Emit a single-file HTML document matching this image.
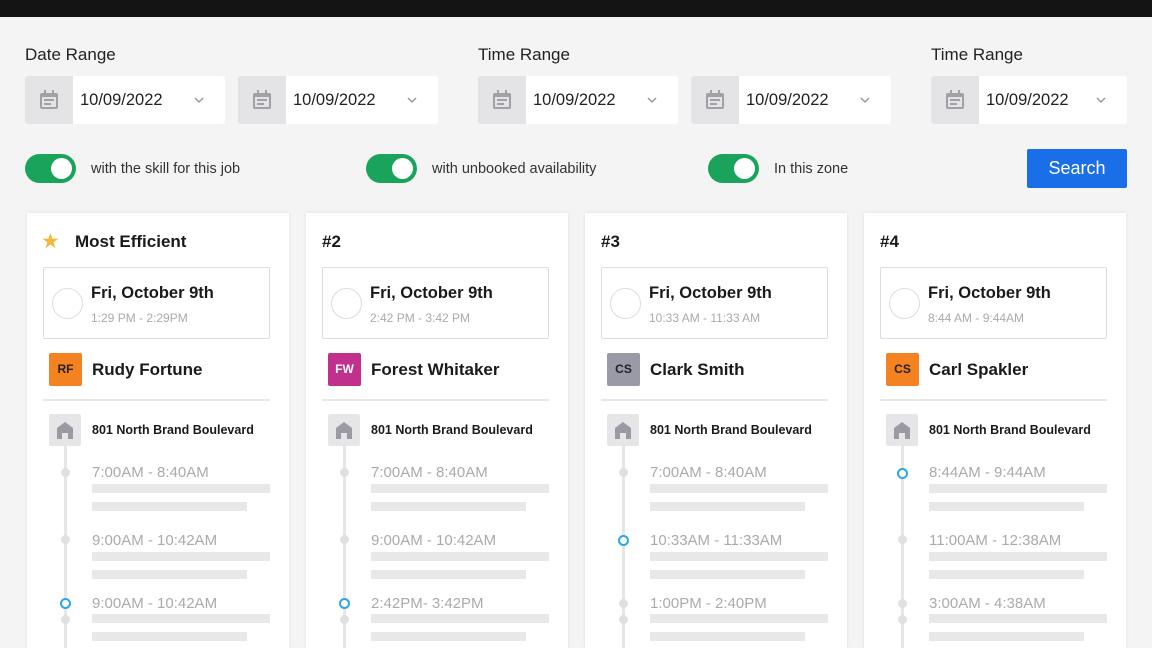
<!DOCTYPE html>
<html><head><meta charset="utf-8"><style>
*{margin:0;padding:0;box-sizing:border-box}
html{width:1152px;height:648px;overflow:hidden}
body{width:1152px;height:648px;overflow:hidden;background:#f4f4f4;font-family:"Liberation Sans",sans-serif;color:#1a1a1a;position:relative}
.a{position:absolute}
.top{left:0;top:0;width:1152px;height:17px;background:#141414}
.lbl{font-size:17px;color:#222;top:45px}
.inp{top:76px;height:48px;background:#fff;border-radius:3px;overflow:hidden}
.inp .ic{position:absolute;left:0;top:0;width:48px;height:48px;background:#e4e4e6}
.inp .ic svg{position:absolute;left:13px;top:13px}
.inp .t{position:absolute;left:55px;top:15px;font-size:16.5px;color:#222}
.inp .ch{position:absolute;right:20px;top:19px}
.tog{top:154px;width:51px;height:29px;border-radius:15px;background:#1aa35a}
.tog::after{content:"";position:absolute;right:4px;top:4px;width:21px;height:21px;border-radius:50%;background:#fff}
.tl{top:161px;font-size:14.5px;color:#333}
.btn{left:1027px;top:149px;width:100px;height:39px;background:#1a6fe8;color:#fff;font-size:18px;text-align:center;line-height:39px;border-radius:2px}
.card{top:213px;width:262px;height:435px;background:#fff;box-shadow:0 0 4px rgba(0,0,0,.08)}
.card .h{position:absolute;left:48px;top:19px;font-size:17px;font-weight:bold}
.card .num{left:16px}
.db{position:absolute;left:16px;top:54px;width:227px;height:72px;border:1px solid #ddd;border-radius:2px}
.db .c{position:absolute;left:8px;top:20px;width:31px;height:31px;border:1px solid #ddd;border-radius:50%}
.db .d{position:absolute;left:47px;top:16px;font-size:16.5px;font-weight:bold}
.db .tm{position:absolute;left:47px;top:43px;font-size:12px;color:#aaa}
.av{position:absolute;left:22px;top:140px;width:33px;height:33px;border-radius:2px;color:#222;font-size:12px;font-weight:bold;text-align:center;line-height:33px}
.nm{position:absolute;left:65px;top:147px;font-size:17px;font-weight:bold}
.dv{position:absolute;left:16px;top:186px;width:227px;height:2px;background:#e8e8e8}
.hm{position:absolute;left:22px;top:201px;width:32px;height:32px;background:#e6e6e8;border-radius:2px}
.hm svg{position:absolute;left:7px;top:7px}
.ad{position:absolute;left:65px;top:210px;font-size:12.5px;font-weight:bold}
.ln{position:absolute;left:37px;top:233px;width:3px;height:230px;background:#e6e6e6}
.dt{position:absolute;left:34px;width:9px;height:9px;border-radius:50%;background:#e0e0e0}
.dt.b{background:#fff;border:2px solid #2aa5f0;left:33px;width:11px;height:11px}
.tx{position:absolute;left:65px;font-size:15px;color:#aaa}
.br{position:absolute;left:65px;height:9px;background:#e8e8e8}
</style></head><body>
<div class="a top"></div>
<div class="a lbl" style="left:25px">Date Range</div>
<div class="a lbl" style="left:478px">Time Range</div>
<div class="a lbl" style="left:931px">Time Range</div>

<div class="a inp" style="left:25px;width:200px"><div class="ic"><svg width="22" height="22" viewBox="0 0 22 22"><rect x="2" y="4" width="18" height="16" rx="2" fill="#a0a0a6"/><rect x="4" y="8" width="14" height="10" fill="#e4e4e6"/><rect x="6" y="1" width="2" height="5" fill="#a0a0a6"/><rect x="14" y="1" width="2" height="5" fill="#a0a0a6"/><rect x="6" y="10" width="10" height="2" fill="#a0a0a6"/><rect x="6" y="14" width="7" height="2" fill="#a0a0a6"/></svg></div><div class="t">10/09/2022</div><svg class="ch" width="12" height="10" viewBox="0 0 12 10"><path d="M2 3l4 4 4-4" fill="none" stroke="#999" stroke-width="1.5"/></svg></div>
<div class="a inp" style="left:238px;width:200px"><div class="ic"><svg width="22" height="22" viewBox="0 0 22 22"><rect x="2" y="4" width="18" height="16" rx="2" fill="#a0a0a6"/><rect x="4" y="8" width="14" height="10" fill="#e4e4e6"/><rect x="6" y="1" width="2" height="5" fill="#a0a0a6"/><rect x="14" y="1" width="2" height="5" fill="#a0a0a6"/><rect x="6" y="10" width="10" height="2" fill="#a0a0a6"/><rect x="6" y="14" width="7" height="2" fill="#a0a0a6"/></svg></div><div class="t">10/09/2022</div><svg class="ch" width="12" height="10" viewBox="0 0 12 10"><path d="M2 3l4 4 4-4" fill="none" stroke="#999" stroke-width="1.5"/></svg></div>
<div class="a inp" style="left:478px;width:200px"><div class="ic"><svg width="22" height="22" viewBox="0 0 22 22"><rect x="2" y="4" width="18" height="16" rx="2" fill="#a0a0a6"/><rect x="4" y="8" width="14" height="10" fill="#e4e4e6"/><rect x="6" y="1" width="2" height="5" fill="#a0a0a6"/><rect x="14" y="1" width="2" height="5" fill="#a0a0a6"/><rect x="6" y="10" width="10" height="2" fill="#a0a0a6"/><rect x="6" y="14" width="7" height="2" fill="#a0a0a6"/></svg></div><div class="t">10/09/2022</div><svg class="ch" width="12" height="10" viewBox="0 0 12 10"><path d="M2 3l4 4 4-4" fill="none" stroke="#999" stroke-width="1.5"/></svg></div>
<div class="a inp" style="left:691px;width:200px"><div class="ic"><svg width="22" height="22" viewBox="0 0 22 22"><rect x="2" y="4" width="18" height="16" rx="2" fill="#a0a0a6"/><rect x="4" y="8" width="14" height="10" fill="#e4e4e6"/><rect x="6" y="1" width="2" height="5" fill="#a0a0a6"/><rect x="14" y="1" width="2" height="5" fill="#a0a0a6"/><rect x="6" y="10" width="10" height="2" fill="#a0a0a6"/><rect x="6" y="14" width="7" height="2" fill="#a0a0a6"/></svg></div><div class="t">10/09/2022</div><svg class="ch" width="12" height="10" viewBox="0 0 12 10"><path d="M2 3l4 4 4-4" fill="none" stroke="#999" stroke-width="1.5"/></svg></div>
<div class="a inp" style="left:931px;width:196px"><div class="ic"><svg width="22" height="22" viewBox="0 0 22 22"><rect x="2" y="4" width="18" height="16" rx="2" fill="#a0a0a6"/><rect x="4" y="8" width="14" height="10" fill="#e4e4e6"/><rect x="6" y="1" width="2" height="5" fill="#a0a0a6"/><rect x="14" y="1" width="2" height="5" fill="#a0a0a6"/><rect x="6" y="10" width="10" height="2" fill="#a0a0a6"/><rect x="6" y="14" width="7" height="2" fill="#a0a0a6"/></svg></div><div class="t">10/09/2022</div><svg class="ch" width="12" height="10" viewBox="0 0 12 10"><path d="M2 3l4 4 4-4" fill="none" stroke="#999" stroke-width="1.5"/></svg></div>

<div class="a tog" style="left:25px"></div><div class="a tl" style="left:91px">with the skill for this job</div>
<div class="a tog" style="left:366px"></div><div class="a tl" style="left:432px">with unbooked availability</div>
<div class="a tog" style="left:708px"></div><div class="a tl" style="left:774px">In this zone</div>
<div class="a btn">Search</div>

<div class="a card" style="left:27px">
<div class="a" style="left:14px;top:16px;color:#f6b83c;font-size:21px">★</div>
<div class="h">Most Efficient</div>
<div class="db"><div class="c"></div><div class="d">Fri, October 9th</div><div class="tm">1:29 PM - 2:29PM</div></div>
<div class="av" style="background:#f58220">RF</div><div class="nm">Rudy Fortune</div>
<div class="dv"></div>
<div class="hm"><svg width="18" height="18" viewBox="0 0 18 18"><path d="M1 7L9 1l8 6v11h-5v-6H6v6H1z" fill="#9a9aa2"/></svg></div><div class="ad">801 North Brand Boulevard</div>
<div class="ln"></div>
<div class="dt" style="top:255px"></div><div class="dt" style="top:322px"></div><div class="dt b" style="top:385px"></div><div class="dt" style="top:402px"></div>
<div class="tx" style="top:251px">7:00AM - 8:40AM</div><div class="br" style="top:271px;width:178px"></div><div class="br" style="top:289px;width:155px"></div>
<div class="tx" style="top:319px">9:00AM - 10:42AM</div><div class="br" style="top:339px;width:178px"></div><div class="br" style="top:357px;width:155px"></div>
<div class="tx" style="top:382px">9:00AM - 10:42AM</div><div class="br" style="top:401px;width:178px"></div><div class="br" style="top:419px;width:155px"></div>
</div>

<div class="a card" style="left:306px">
<div class="h num">#2</div>
<div class="db"><div class="c"></div><div class="d">Fri, October 9th</div><div class="tm">2:42 PM - 3:42 PM</div></div>
<div class="av" style="background:#c0308c;color:#fff">FW</div><div class="nm">Forest Whitaker</div>
<div class="dv"></div>
<div class="hm"><svg width="18" height="18" viewBox="0 0 18 18"><path d="M1 7L9 1l8 6v11h-5v-6H6v6H1z" fill="#9a9aa2"/></svg></div><div class="ad">801 North Brand Boulevard</div>
<div class="ln"></div>
<div class="dt" style="top:255px"></div><div class="dt" style="top:322px"></div><div class="dt b" style="top:385px"></div><div class="dt" style="top:402px"></div>
<div class="tx" style="top:251px">7:00AM - 8:40AM</div><div class="br" style="top:271px;width:178px"></div><div class="br" style="top:289px;width:155px"></div>
<div class="tx" style="top:319px">9:00AM - 10:42AM</div><div class="br" style="top:339px;width:178px"></div><div class="br" style="top:357px;width:155px"></div>
<div class="tx" style="top:382px">2:42PM- 3:42PM</div><div class="br" style="top:401px;width:178px"></div><div class="br" style="top:419px;width:155px"></div>
</div>

<div class="a card" style="left:585px">
<div class="h num">#3</div>
<div class="db"><div class="c"></div><div class="d">Fri, October 9th</div><div class="tm">10:33 AM - 11:33 AM</div></div>
<div class="av" style="background:#9a9aa6">CS</div><div class="nm">Clark Smith</div>
<div class="dv"></div>
<div class="hm"><svg width="18" height="18" viewBox="0 0 18 18"><path d="M1 7L9 1l8 6v11h-5v-6H6v6H1z" fill="#9a9aa2"/></svg></div><div class="ad">801 North Brand Boulevard</div>
<div class="ln"></div>
<div class="dt" style="top:255px"></div><div class="dt b" style="top:322px"></div><div class="dt" style="top:386px"></div><div class="dt" style="top:402px"></div>
<div class="tx" style="top:251px">7:00AM - 8:40AM</div><div class="br" style="top:271px;width:178px"></div><div class="br" style="top:289px;width:155px"></div>
<div class="tx" style="top:319px">10:33AM - 11:33AM</div><div class="br" style="top:339px;width:178px"></div><div class="br" style="top:357px;width:155px"></div>
<div class="tx" style="top:382px">1:00PM - 2:40PM</div><div class="br" style="top:401px;width:178px"></div><div class="br" style="top:419px;width:155px"></div>
</div>

<div class="a card" style="left:864px">
<div class="h num">#4</div>
<div class="db"><div class="c"></div><div class="d">Fri, October 9th</div><div class="tm">8:44 AM - 9:44AM</div></div>
<div class="av" style="background:#f58220">CS</div><div class="nm">Carl Spakler</div>
<div class="dv"></div>
<div class="hm"><svg width="18" height="18" viewBox="0 0 18 18"><path d="M1 7L9 1l8 6v11h-5v-6H6v6H1z" fill="#9a9aa2"/></svg></div><div class="ad">801 North Brand Boulevard</div>
<div class="ln"></div>
<div class="dt b" style="top:255px"></div><div class="dt" style="top:322px"></div><div class="dt" style="top:386px"></div><div class="dt" style="top:402px"></div>
<div class="tx" style="top:251px">8:44AM - 9:44AM</div><div class="br" style="top:271px;width:178px"></div><div class="br" style="top:289px;width:155px"></div>
<div class="tx" style="top:319px">11:00AM - 12:38AM</div><div class="br" style="top:339px;width:178px"></div><div class="br" style="top:357px;width:155px"></div>
<div class="tx" style="top:382px">3:00AM - 4:38AM</div><div class="br" style="top:401px;width:178px"></div><div class="br" style="top:419px;width:155px"></div>
</div>
</body></html>
